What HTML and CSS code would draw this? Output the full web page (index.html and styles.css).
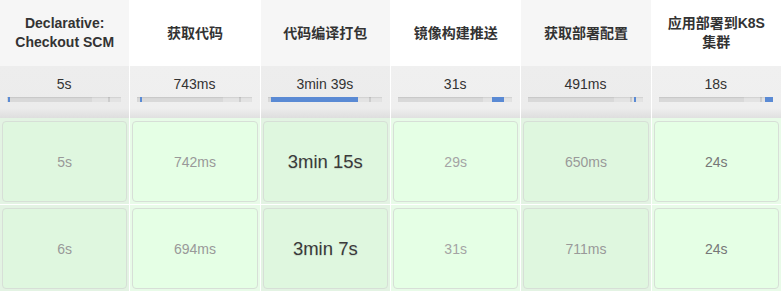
FILE: index.html
```html
<!DOCTYPE html>
<html lang="zh-CN">
<head>
    <meta charset="UTF-8">
    <meta name="viewport" content="width=device-width, initial-scale=1.0">
    <title>Stage View</title>
    <link rel="stylesheet" href="styles.css">
</head>
<body>
    <div class="stage-view">
        <!-- 阶段名称 -->
        <div class="row row-head">
            <div class="stage-header">Declarative:<br>Checkout SCM</div>
            <div class="stage-header">获取代码</div>
            <div class="stage-header">代码编译打包</div>
            <div class="stage-header">镜像构建推送</div>
            <div class="stage-header">获取部署配置</div>
            <div class="stage-header">应用部署到K8S<br>集群</div>
        </div>

        <!-- 平均耗时 -->
        <div class="row row-avg">
            <div class="avg-cell">
                <div class="avg-time">5s</div>
                <div class="bar"><span class="bar-fill" style="left:1%;width:2%"></span></div>
            </div>
            <div class="avg-cell">
                <div class="avg-time">743ms</div>
                <div class="bar"><span class="bar-fill" style="left:2%;width:1%"></span></div>
            </div>
            <div class="avg-cell">
                <div class="avg-time">3min 39s</div>
                <div class="bar"><span class="bar-fill" style="left:3%;width:76%"></span></div>
            </div>
            <div class="avg-cell">
                <div class="avg-time">31s</div>
                <div class="bar"><span class="bar-fill" style="left:82%;width:11%"></span></div>
            </div>
            <div class="avg-cell">
                <div class="avg-time">491ms</div>
                <div class="bar"><span class="bar-fill" style="left:92%;width:1%"></span></div>
            </div>
            <div class="avg-cell">
                <div class="avg-time">18s</div>
                <div class="bar"><span class="bar-fill" style="left:93%;width:7%"></span></div>
            </div>
        </div>

        <!-- 构建记录 -->
        <div class="row row-build">
            <div class="stage-cell"><div class="stage-box">5s</div></div>
            <div class="stage-cell"><div class="stage-box">742ms</div></div>
            <div class="stage-cell"><div class="stage-box long">3min 15s</div></div>
            <div class="stage-cell"><div class="stage-box light">29s</div></div>
            <div class="stage-cell"><div class="stage-box">650ms</div></div>
            <div class="stage-cell"><div class="stage-box mid">24s</div></div>
        </div>
        <div class="row row-build">
            <div class="stage-cell"><div class="stage-box">6s</div></div>
            <div class="stage-cell"><div class="stage-box">694ms</div></div>
            <div class="stage-cell"><div class="stage-box long">3min 7s</div></div>
            <div class="stage-cell"><div class="stage-box light">31s</div></div>
            <div class="stage-cell"><div class="stage-box">711ms</div></div>
            <div class="stage-cell"><div class="stage-box mid">24s</div></div>
        </div>
    </div>
</body>
</html>
```

FILE: styles.css
```css
:root {
    --bar-blue: #5a8ad4;
    --text-dark: #333;
}

body {
    font-family: "Liberation Sans", Arial, "Noto Sans CJK SC", sans-serif;
    background: #fff;
    margin: 0;
    color: var(--text-dark);
}

.stage-view {
    width: 781px;
}

.row {
    display: grid;
    grid-template-columns: repeat(6, 1fr);
    column-gap: 1px;
    background: #fff;
}

/* 表头 */
.stage-header {
    height: 66px;
    display: flex;
    align-items: center;
    justify-content: center;
    text-align: center;
    font-size: 14px;
    font-weight: bold;
    line-height: 19px;
    background: #fff;
}

.stage-header:nth-child(odd) {
    background: #f6f6f6;
}

/* 平均耗时行 */
.avg-cell {
    height: 52px;
    box-sizing: border-box;
    padding: 10px 8px 0 7px;
    background: linear-gradient(to bottom, #ededed 0, #ececec 42px, #dedede 52px);
    text-align: center;
}

.avg-cell:nth-child(even) {
    background: linear-gradient(to bottom, #f0f0f0 0, #efefef 42px, #e0e0e0 52px);
}

.avg-time {
    font-size: 14px;
    line-height: 16px;
}

.bar {
    position: relative;
    height: 5px;
    margin-top: 5px;
    background: linear-gradient(to right, #d9d9d9 0, #d9d9d9 75%, #e3e3e3 75%, #e3e3e3 89%, #cdcdcd 89%, #cdcdcd 90%, #e3e3e3 90%);
    box-shadow: inset 0 1px 1px rgba(0,0,0,0.08);
}

.bar-fill {
    position: absolute;
    top: 0;
    bottom: 0;
    min-width: 2px;
    background: var(--bar-blue);
}

/* 构建记录 */
.row-build + .row-build {
    margin-top: 1px;
}

.stage-cell {
    height: 86px;
    box-sizing: border-box;
    padding: 3px 2px 2px 2px;
    background: #e3f3e3;
}

.stage-cell:nth-child(even) {
    background: #e8fbe8;
}

.stage-box {
    height: 100%;
    box-sizing: border-box;
    display: flex;
    align-items: center;
    justify-content: center;
    border: 1px solid #d7dfd7;
    border-radius: 4px;
    background: #dff7df;
    font-size: 14px;
    color: #999;
}

.stage-cell:nth-child(even) .stage-box {
    background: #e5ffe5;
}

.stage-box.long {
    font-size: 18.5px;
    color: #3a3a3a;
    text-shadow: 0 1px 1px rgba(0,0,0,0.12);
}

.stage-box.mid {
    color: #777;
}

.stage-box.light {
    color: #a4a4a4;
}
```
